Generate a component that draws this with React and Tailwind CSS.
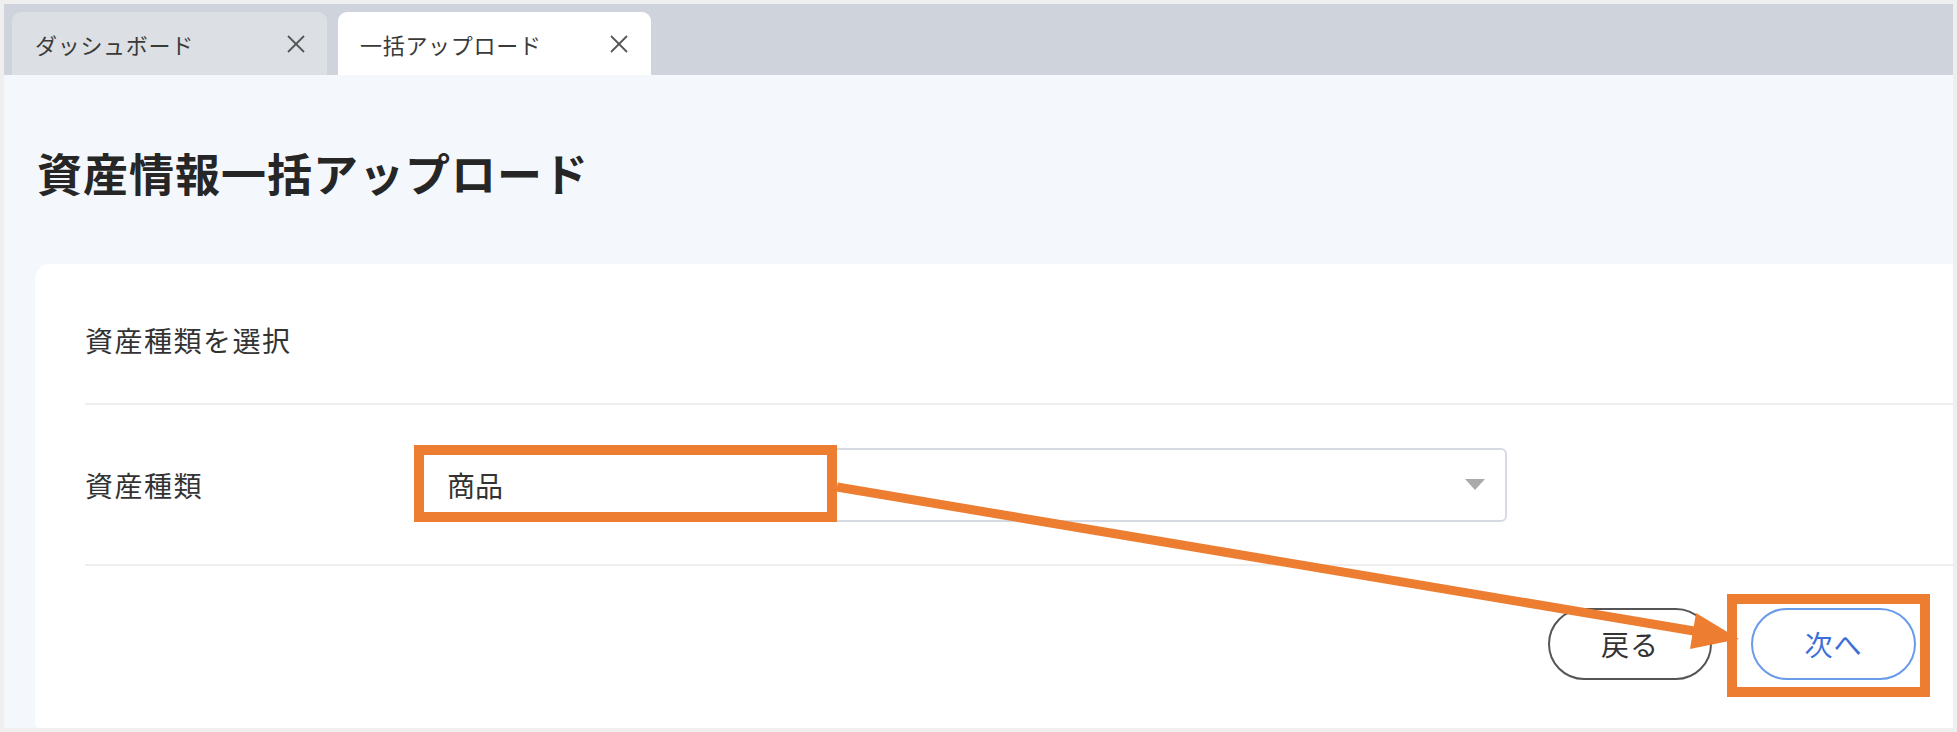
import React from "react";

function CloseIcon() {
  return (
    <svg width="22" height="22" viewBox="0 0 22 22" className="shrink-0">
      <line x1="3" y1="3" x2="19" y2="19" stroke="#555" strokeWidth="1.8" />
      <line x1="19" y1="3" x2="3" y2="19" stroke="#555" strokeWidth="1.8" />
    </svg>
  );
}

export default function App() {
  const font = { fontFamily: '"Noto Sans CJK JP", "Noto Sans", sans-serif' };
  return (
    <div className="relative w-[1957px] h-[732px] bg-[#efefef] p-[4px] overflow-hidden" style={font}>
      <div className="flex flex-col h-full w-full">
        {/* Tab bar */}
        <div className="h-[71px] bg-[#cfd4dc] flex items-end gap-[11px] pl-[8px] shrink-0">
          <div className="h-[63px] w-[315px] bg-[#dcdfe4] rounded-t-[9px] flex items-center justify-between pl-[23px] pr-[20px]">
            <span className="text-[22px] text-[#3a3a3a] leading-none tracking-[0.7px]">ダッシュボード</span>
            <CloseIcon />
          </div>
          <div className="h-[63px] w-[313px] bg-white rounded-t-[9px] flex items-center justify-between pl-[22px] pr-[21px]">
            <span className="text-[22px] text-[#3a3a3a] leading-none tracking-[0.7px]">一括アップロード</span>
            <CloseIcon />
          </div>
        </div>
        {/* Content */}
        <div className="flex-1 bg-[#f4f7fc] flex flex-col">
          <div className="pl-[33px] pt-[71px] h-[189px] shrink-0">
            <h1 className="text-[45px] leading-[54px] font-bold text-[#262626] tracking-[1px]">資産情報一括アップロード</h1>
          </div>
          <div className="flex-1 ml-[31px] bg-white rounded-tl-[15px] rounded-bl-[6px] flex flex-col">
            <div className="h-[139px] flex items-center pl-[50px] pt-[13px] shrink-0">
              <span className="text-[28px] text-[#333] leading-none tracking-[1.5px]">資産種類を選択</span>
            </div>
            <div className="h-[2px] bg-[#eeeeee] ml-[50px] shrink-0" />
            <div className="h-[159px] flex items-center pl-[50px] shrink-0">
              <span className="w-[331px] text-[28px] text-[#333] leading-none tracking-[1.5px]">資産種類</span>
              <div className="w-[1091px] h-[74px] border-2 border-[#d6dae2] rounded-[6px] flex items-center justify-between pl-[29px] pr-[20px]">
                <span className="text-[28px] text-[#333] leading-none">商品</span>
                <svg width="20" height="11" viewBox="0 0 20 11">
                  <polygon points="0,0 20,0 10,11" fill="#aaaaaa" />
                </svg>
              </div>
            </div>
            <div className="h-[2px] bg-[#eeeeee] ml-[50px] shrink-0" />
            <div className="flex justify-end items-start pt-[42px] pr-[37px] gap-[39px]">
              <button className="w-[164px] h-[72px] rounded-full border-2 border-[#555] text-[28px] text-[#333] leading-none bg-white tracking-[1px]">戻る</button>
              <button className="w-[165px] h-[72px] rounded-full border-2 border-[#6a9be9] text-[28px] text-[#3d6fd6] leading-none bg-white tracking-[1px]">次へ</button>
            </div>
          </div>
        </div>
      </div>

      {/* Annotation overlays */}
      <div className="absolute left-[414px] top-[445px] w-[423px] h-[77px] border-[10px] border-[#ed7d31]" />
      <div className="absolute left-[1727px] top-[594px] w-[203px] h-[103px] border-[10px] border-[#ed7d31]" />
      <svg className="absolute left-0 top-0 pointer-events-none" width="1957" height="732">
        <line x1="837" y1="487" x2="1694" y2="631" stroke="#ed7d31" strokeWidth="9" />
        <polygon points="1739,639 1696,613 1690,649" fill="#ed7d31" />
      </svg>
    </div>
  );
}
